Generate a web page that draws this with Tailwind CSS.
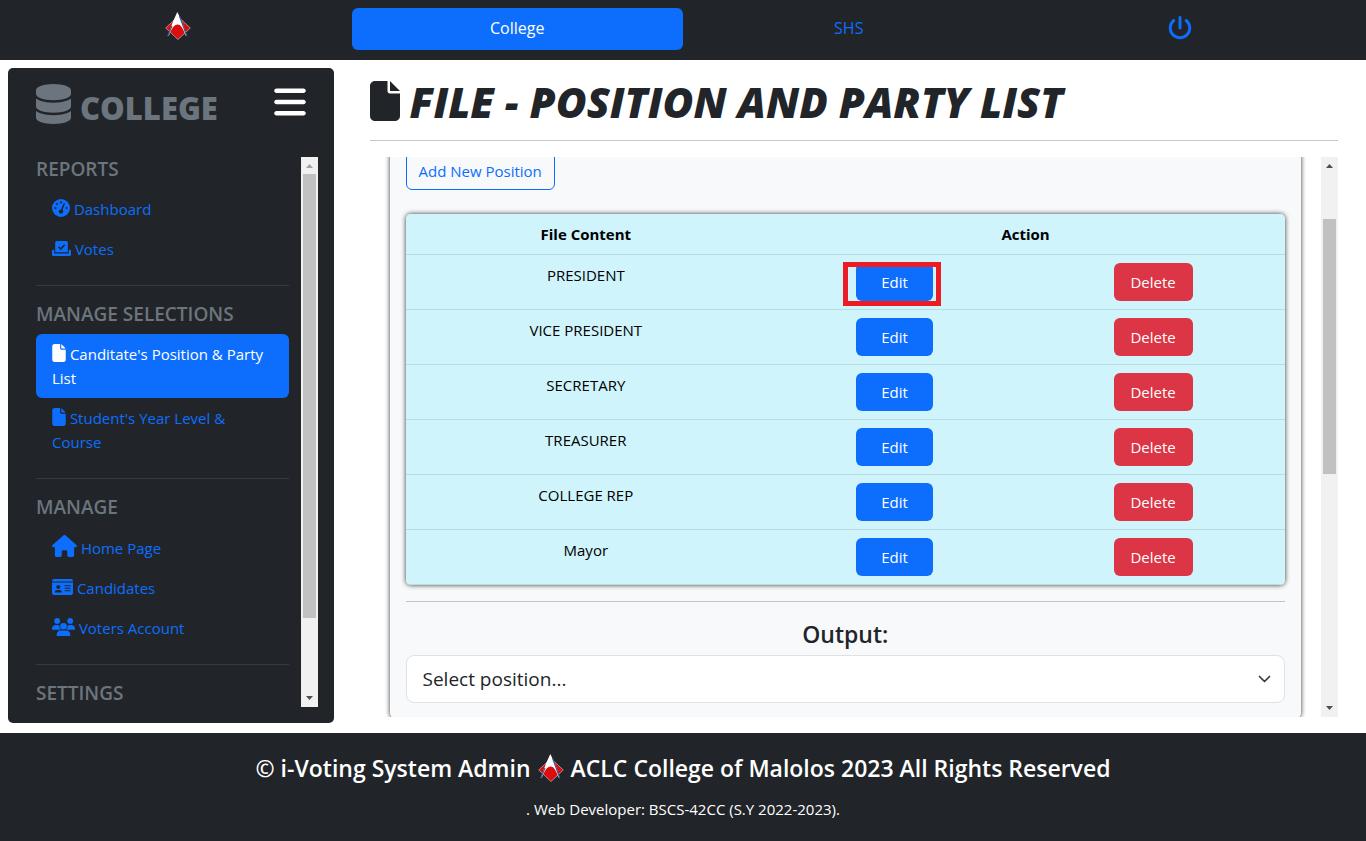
<!DOCTYPE html>
<html lang="en">
<head>
<meta charset="utf-8">
<meta name="viewport" content="width=device-width, initial-scale=1">
<title>i-Voting System Admin</title>
<script src="https://cdn.jsdelivr.net/npm/@tailwindcss/browser@4"></script>
</head>
<body class="flex h-screen flex-col overflow-hidden bg-white font-['Segoe_UI','Open_Sans',sans-serif] text-[15px] leading-6 text-[#212529]">
<svg class="hidden" aria-hidden="true">
  <symbol id="logo" viewBox="0 0 26 28">
    <path d="M13 4.500 25.300 16 13 27.500.700 16Z" fill="#dc0d0d" stroke="#cfd3dc" stroke-width=".6"/>
    <path d="M12.300 0 8 9.500 2.700 24 4 23.500C6.500 17 9 12.800 12.700 12.600 16 12.500 18.500 17.500 20.700 23.800L21.800 24 17 9.500Z" fill="#fff"/>
    <path d="M2.700 24.300 7 14M21.900 24.300 14.500 4" stroke="#3d568c" stroke-width="1.200"/>
  </symbol>
  <symbol id="file" viewBox="0 0 384 512"><path fill="currentColor" d="M0 64C0 28.700 28.700 0 64 0H224V128c0 17.700 14.300 32 32 32H384V448c0 35.300-28.700 64-64 64H64c-35.300 0-64-28.700-64-64V64zm384 64H256V0L384 128z"/></symbol>
</svg>

<header class="bg-[#212529] px-5 pt-2 pb-[10px]">
  <nav class="grid grid-cols-4 text-center text-[#0d6efd]" aria-label="Sections">
    <a href="#" class="flex items-center justify-center pr-4 pb-[6px]" aria-label="Home"><svg class="h-7 w-[26px]"><use href="#logo"/></svg></a>
    <a href="#" class="rounded-md bg-[#0d6efd] pt-2 pb-[10px] text-base leading-6 text-white">College</a>
    <a href="#" class="pt-2 pb-[10px] text-base leading-6">SHS</a>
    <a href="#" class="flex items-center justify-center pb-[2px]" aria-label="Log out"><svg class="size-6" viewBox="0 0 512 512" fill="currentColor"><path d="M288 32c0-17.700-14.300-32-32-32s-32 14.300-32 32V256c0 17.700 14.300 32 32 32s32-14.300 32-32V32zM143.500 120.600c13.600-11.300 15.400-31.500 4.100-45.100s-31.500-15.400-45.100-4.100C49.700 115.400 16 181.800 16 256c0 132.500 107.500 240 240 240s240-107.500 240-240c0-74.200-33.800-140.600-86.600-184.600c-13.600-11.300-33.800-9.400-45.100 4.100s-9.400 33.800 4.100 45.100c38.900 32.300 63.500 81 63.500 135.400c0 97.200-78.800 176-176 176s-176-78.800-176-176c0-54.400 24.700-103.100 63.500-135.400z"/></svg></a>
  </nav>
</header>

<div class="flex min-h-0 flex-1">
  <div class="flex w-1/4 flex-col px-2 pt-2 pb-[10px]">
    <aside class="flex min-h-0 flex-1 flex-col rounded-[5px] bg-[#212529] pr-4 pb-4 pl-7">
      <div class="flex shrink-0 items-start justify-between pt-4 pr-3 pb-[29px]">
        <div class="flex items-start gap-[9px] text-[#6c757d]">
          <svg class="h-10 w-[35px]" viewBox="0 0 448 512" fill="currentColor"><path d="M448 80v48c0 44.200-100.300 80-224 80S0 172.200 0 128V80C0 35.800 100.300 0 224 0S448 35.800 448 80zM393.200 214.700c20.800-7.400 39.900-16.900 54.800-28.600V288c0 44.200-100.300 80-224 80S0 332.200 0 288V186.100c14.900 11.800 34 21.200 54.800 28.600C99.700 230.700 159.500 240 224 240s124.300-9.300 169.200-25.300zM0 346.100c14.900 11.800 34 21.200 54.800 28.600C99.700 390.700 159.500 400 224 400s124.300-9.300 169.200-25.300c20.800-7.400 39.900-16.900 54.800-28.600V432c0 44.200-100.300 80-224 80S0 476.200 0 432V346.100z"/></svg>
          <span class="pt-1 text-[31px] leading-10 font-extrabold">COLLEGE</span>
        </div>
        <button type="button" class="text-white" aria-label="Toggle menu"><svg class="h-9 w-8" viewBox="0 0 448 512" fill="currentColor"><path d="M0 96C0 78.300 14.300 64 32 64H416c17.700 0 32 14.300 32 32s-14.300 32-32 32H32C14.300 128 0 113.700 0 96zM0 256c0-17.700 14.300-32 32-32H416c17.700 0 32 14.300 32 32s-14.300 32-32 32H32c-17.700 0-32-14.300-32-32zM448 416c0 17.700-14.300 32-32 32H32c-17.700 0-32-14.300-32-32s14.300-32 32-32H416c17.700 0 32 14.300 32 32z"/></svg></button>
      </div>
      <div class="flex min-h-0 flex-1 gap-3">
        <nav class="min-h-0 flex-1 overflow-hidden text-[#0d6efd]" aria-label="Administration">
          <h5 class="mb-2 text-[19px] leading-6 font-semibold text-[#6c757d]">REPORTS</h5>
          <a href="#" class="block px-4 py-2"><svg class="inline-block size-[18px] align-[-2px]" viewBox="0 0 18 18"><circle cx="9" cy="9" r="9" fill="currentColor"/><g fill="#212529"><circle cx="9" cy="3.300" r="1.100"/><circle cx="5" cy="5" r="1.100"/><circle cx="3.400" cy="9" r="1.100"/><circle cx="14.600" cy="9" r="1.100"/><circle cx="9" cy="12.600" r="2.200"/></g><path d="M9.300 12 12.200 4.800" stroke="#212529" stroke-width="1.400" stroke-linecap="round"/></svg> Dashboard</a>
          <a href="#" class="block px-4 py-2"><svg class="inline-block h-[15px] w-[19px] align-[-1px]" viewBox="0 0 19 15"><path fill="currentColor" d="M4.700 0h9.600a1.500 1.500 0 0 1 1.500 1.500V11.200H3.200V1.500A1.500 1.500 0 0 1 4.700 0ZM0 10q0-1.200 1.200-1.200h1v3.600h14.600V8.800h1q1.200 0 1.200 1.200v3.700q0 1.300-1.300 1.300H1.300Q0 15 0 13.700Z"/><path d="m6.600 5.800 2.200 2.300 3.900-4.400" fill="none" stroke="#212529" stroke-width="1.500"/></svg> Votes</a>
          <hr class="my-4 border-[#373b3e]">
          <h5 class="mb-2 text-[19px] leading-6 font-semibold text-[#6c757d]">MANAGE SELECTIONS</h5>
          <a href="#" class="block rounded-md bg-[#0d6efd] px-4 py-2 text-white" aria-current="page"><svg class="inline-block h-[18px] w-[14px] align-[-2px]"><use href="#file"/></svg> Canditate's Position &amp; Party List</a>
          <a href="#" class="block px-4 py-2"><svg class="inline-block h-[18px] w-[14px] align-[-2px]"><use href="#file"/></svg> Student's Year Level &amp; Course</a>
          <hr class="my-4 border-[#373b3e]">
          <h5 class="mb-2 text-[19px] leading-6 font-semibold text-[#6c757d]">MANAGE</h5>
          <a href="#" class="block px-4 py-2"><svg class="inline-block h-[22px] w-[25px] align-[-3px]" viewBox="0 0 576 512" fill="currentColor"><path d="M575.800 255.500c0 18-15 32.100-32 32.100h-32l.700 160.200c0 2.700-.200 5.400-.500 8.100V472c0 22.100-17.900 40-40 40H456c-1.100 0-2.200 0-3.300-.100c-1.400 .100-2.800 .100-4.200 .100H416 392c-22.100 0-40-17.900-40-40V448 384c0-17.700-14.300-32-32-32H256c-17.700 0-32 14.300-32 32v64 24c0 22.100-17.900 40-40 40H160 128.100c-1.500 0-3-.100-4.500-.200c-1.200 .100-2.400 .200-3.600 .200H104c-22.100 0-40-17.900-40-40V360c0-.900 0-1.900 .100-2.800V287.600H32c-18 0-32-14-32-32.100c0-9 3-17 10-24L266.400 8c7-7 15-8 22-8s15 2 21 7L564.800 231.500c8 7 12 15 11 24z"/></svg> Home Page</a>
          <a href="#" class="block px-4 py-2"><svg class="inline-block h-4 w-[21px] align-[-1px]" viewBox="0 0 21 16"><path fill="currentColor" d="M2 0h17a2 2 0 0 1 2 2v.500H0V2A2 2 0 0 1 2 0ZM0 3.600h21V14a2 2 0 0 1-2 2H2a2 2 0 0 1-2-2Z"/><g fill="#212529"><circle cx="6.300" cy="8" r="2.100"/><path d="M2.700 13.400q0-2.500 2.500-2.500h2.200q2.500 0 2.500 2.500ZM12.600 6.200h5.900v1h-5.900ZM12.600 8.700h5.900v1h-5.900ZM12.600 11.200h5.900v1h-5.900Z"/></g></svg> Candidates</a>
          <a href="#" class="block px-4 py-2"><svg class="inline-block h-[18px] w-[23px] align-[-2px]" viewBox="0 0 23 18" fill="currentColor"><circle cx="5.200" cy="2.900" r="2.900"/><circle cx="18.200" cy="2.900" r="2.900"/><circle cx="11.500" cy="8.200" r="3.300"/><path d="M0 11.200Q0 7 4 7h1.500q1 0 1.900.500-.300 2.500 1.600 4.200H.600Q0 11.700 0 11.200ZM23 11.200Q23 7 19 7h-1.500q-1 0-1.900.500.300 2.500-1.600 4.200h8.400q.600 0 .600-.500ZM4.600 17.200q0-4.700 4.500-4.700h4.800q4.500 0 4.500 4.700 0 .800-.800.800H5.400q-.800 0-.800-.800Z"/></svg> Voters Account</a>
          <hr class="my-4 border-[#373b3e]">
          <h5 class="text-[19px] leading-6 font-semibold text-[#6c757d]">SETTINGS</h5>
        </nav>
        <div class="flex w-[17px] shrink-0 flex-col bg-[#f1f1f1]" aria-hidden="true">
          <svg class="size-[17px] shrink-0" viewBox="0 0 17 17"><path d="M5 11h7L8.500 7Z" fill="#a3a3a3"/></svg>
          <div class="flex min-h-0 flex-1 flex-col px-[2px]"><div class="h-[86%] bg-[#c1c1c1]"></div></div>
          <svg class="size-[17px] shrink-0" viewBox="0 0 17 17"><path d="M5 6h7L8.500 10Z" fill="#505050"/></svg>
        </div>
      </div>
    </aside>
  </div>

  <main class="flex w-3/4 flex-col px-7 pb-4">
    <h1 class="flex shrink-0 items-start gap-[10px] pt-[21px] text-[42px] leading-[42px] font-extrabold italic"><svg class="h-10 w-[30px]"><use href="#file"/></svg>FILE - POSITION AND PARTY LIST</h1>
    <hr class="mt-[17px] mb-4 shrink-0 border-[#c8c9ca]">
    <div class="flex min-h-0 flex-1">
      <div class="min-h-0 flex-1 overflow-hidden px-5">
        <section class="-mt-[5px] rounded-b-md bg-[#f8f9fa] px-4 pb-4 shadow-[0_0_5px_rgba(0,0,0,0.8)]">
          <button type="button" class="rounded-md border border-[#0d6efd] px-3 py-[6px] text-[#0d6efd]">Add New Position</button>
          <div class="mt-6 overflow-hidden rounded-[5px] shadow-[0_0_5px_rgba(0,0,0,0.8)]">
            <table class="w-full table-fixed border-collapse bg-[#cff4fc] text-center leading-6 text-black">
              <colgroup><col class="w-[41%]"><col class="w-[29%]"><col class="w-[30%]"></colgroup>
              <thead><tr class="border-b border-[#badce3]"><th class="py-2 font-bold">File Content</th><th colspan="2" class="py-2 font-bold">Action</th></tr></thead>
              <tbody class="align-top">
                <tr class="border-b border-[#badce3]"><td class="py-2">PRESIDENT</td><td class="py-2 pl-[2px]"><div class="relative inline-block align-top"><button type="button" class="h-[38px] w-[77px] rounded-md bg-[#0d6efd] align-top text-white">Edit</button><span class="pointer-events-none absolute -top-px -right-2 -bottom-[5px] -left-[13px] border-5 border-[#ed1c24]"></span></div></td><td class="py-2"><button type="button" class="h-[38px] w-[79px] rounded-md bg-[#dc3545] align-top text-white">Delete</button></td></tr>
                <tr class="border-b border-[#badce3]"><td class="py-2">VICE PRESIDENT</td><td class="py-2 pl-[2px]"><button type="button" class="h-[38px] w-[77px] rounded-md bg-[#0d6efd] align-top text-white">Edit</button></td><td class="py-2"><button type="button" class="h-[38px] w-[79px] rounded-md bg-[#dc3545] align-top text-white">Delete</button></td></tr>
                <tr class="border-b border-[#badce3]"><td class="py-2">SECRETARY</td><td class="py-2 pl-[2px]"><button type="button" class="h-[38px] w-[77px] rounded-md bg-[#0d6efd] align-top text-white">Edit</button></td><td class="py-2"><button type="button" class="h-[38px] w-[79px] rounded-md bg-[#dc3545] align-top text-white">Delete</button></td></tr>
                <tr class="border-b border-[#badce3]"><td class="py-2">TREASURER</td><td class="py-2 pl-[2px]"><button type="button" class="h-[38px] w-[77px] rounded-md bg-[#0d6efd] align-top text-white">Edit</button></td><td class="py-2"><button type="button" class="h-[38px] w-[79px] rounded-md bg-[#dc3545] align-top text-white">Delete</button></td></tr>
                <tr class="border-b border-[#badce3]"><td class="py-2">COLLEGE REP</td><td class="py-2 pl-[2px]"><button type="button" class="h-[38px] w-[77px] rounded-md bg-[#0d6efd] align-top text-white">Edit</button></td><td class="py-2"><button type="button" class="h-[38px] w-[79px] rounded-md bg-[#dc3545] align-top text-white">Delete</button></td></tr>
                <tr class="border-b border-[#badce3]"><td class="py-2">Mayor</td><td class="py-2 pl-[2px]"><button type="button" class="h-[38px] w-[77px] rounded-md bg-[#0d6efd] align-top text-white">Edit</button></td><td class="py-2"><button type="button" class="h-[38px] w-[79px] rounded-md bg-[#dc3545] align-top text-white">Delete</button></td></tr>
              </tbody>
            </table>
          </div>
          <hr class="my-4 border-[#c2c4c5]">
          <label for="position" class="mb-[5px] block text-center text-[23px] leading-8 font-semibold">Output:</label>
          <div class="relative">
            <select id="position" class="block h-12 w-full appearance-none rounded-lg border border-[#dee2e6] bg-white px-4 text-[19px]"><option>Select position...</option></select>
            <svg class="pointer-events-none absolute top-4 right-3 size-4" viewBox="0 0 16 16" fill="none" stroke="#343a40" stroke-width="1.700" stroke-linecap="round" stroke-linejoin="round"><path d="m2.500 5.500 5 5 5-5"/></svg>
          </div>
        </section>
      </div>
      <div class="flex w-[17px] shrink-0 flex-col bg-[#f1f1f1]" aria-hidden="true">
        <svg class="size-[17px] shrink-0" viewBox="0 0 17 17"><path d="M5 11h7L8.500 7Z" fill="#505050"/></svg>
        <div class="flex min-h-0 flex-1 flex-col px-[2px]"><div class="h-[8.500%] shrink-0"></div><div class="h-[48.600%] bg-[#c1c1c1]"></div></div>
        <svg class="size-[17px] shrink-0" viewBox="0 0 17 17"><path d="M5 6h7L8.500 10Z" fill="#505050"/></svg>
      </div>
    </div>
  </main>
</div>

<footer class="bg-[#212529] px-3 pt-[19px] pb-5 text-center text-white">
  <p class="flex items-center justify-center gap-[7px] text-[23px] leading-8 font-semibold">© i-Voting System Admin <svg class="h-7 w-[26px]"><use href="#logo"/></svg> ACLC College of Malolos 2023 All Rights Reserved</p>
  <p class="mt-[13px] leading-6">. Web Developer: BSCS-42CC (S.Y 2022-2023).</p>
</footer>
</body>
</html>
